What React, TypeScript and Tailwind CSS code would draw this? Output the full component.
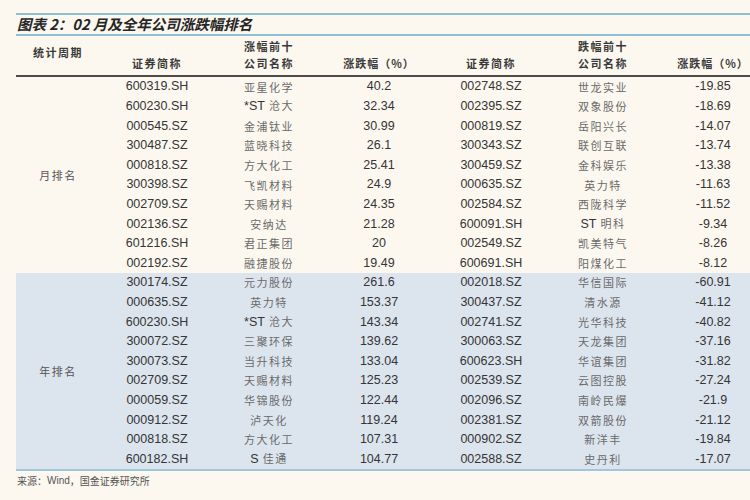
import React from 'react'

type Row = [string, string, string, string, string, string]

const monthRows: Row[] = [
  ['600319.SH', '亚星化学', '40.2', '002748.SZ', '世龙实业', '-19.85'],
  ['600230.SH', '*ST 沧大', '32.34', '002395.SZ', '双象股份', '-18.69'],
  ['000545.SZ', '金浦钛业', '30.99', '000819.SZ', '岳阳兴长', '-14.07'],
  ['300487.SZ', '蓝晓科技', '26.1', '300343.SZ', '联创互联', '-13.74'],
  ['000818.SZ', '方大化工', '25.41', '300459.SZ', '金科娱乐', '-13.38'],
  ['300398.SZ', '飞凯材料', '24.9', '000635.SZ', '英力特', '-11.63'],
  ['002709.SZ', '天赐材料', '24.35', '002584.SZ', '西陇科学', '-11.52'],
  ['002136.SZ', '安纳达', '21.28', '600091.SH', 'ST 明科', '-9.34'],
  ['601216.SH', '君正集团', '20', '002549.SZ', '凯美特气', '-8.26'],
  ['002192.SZ', '融捷股份', '19.49', '600691.SH', '阳煤化工', '-8.12'],
]

const yearRows: Row[] = [
  ['300174.SZ', '元力股份', '261.6', '002018.SZ', '华信国际', '-60.91'],
  ['000635.SZ', '英力特', '153.37', '300437.SZ', '清水源', '-41.12'],
  ['600230.SH', '*ST 沧大', '143.34', '002741.SZ', '光华科技', '-40.82'],
  ['300072.SZ', '三聚环保', '139.62', '300063.SZ', '天龙集团', '-37.16'],
  ['300073.SZ', '当升科技', '133.04', '600623.SH', '华谊集团', '-31.82'],
  ['002709.SZ', '天赐材料', '125.23', '002539.SZ', '云图控股', '-27.24'],
  ['000059.SZ', '华锦股份', '122.44', '002096.SZ', '南岭民爆', '-21.9'],
  ['000912.SZ', '泸天化', '119.24', '002381.SZ', '双箭股份', '-21.12'],
  ['000818.SZ', '方大化工', '107.31', '000902.SZ', '新洋丰', '-19.84'],
  ['600182.SH', 'S 佳通', '104.77', '002588.SZ', '史丹利', '-17.07'],
]

const cols = 'grid grid-cols-[114px_110px_110px_114px_110px_110px]'
const num = "font-['Liberation_Sans',sans-serif] text-[12.5px] text-[#353535] text-center"
const cjk = "font-['Noto_Sans_CJK_SC',sans-serif] text-[11px] tracking-[1.5px] text-[#6a6a6a] text-center"
const head = "font-['Noto_Sans_CJK_SC',sans-serif] text-[11px] font-bold tracking-[1.5px] text-[#3a3a3a] text-center"

function Name({ text }: { text: string }) {
  // names like "ST 明科" mix latin prefix with chinese
  const m = text.match(/^(\*?ST|S) (.*)$/)
  if (!m) return <div className={cjk}>{text}</div>
  return (
    <div className={cjk}>
      <span className="font-['Liberation_Sans',sans-serif] text-[12.5px] tracking-normal text-[#353535]">{m[1]}</span> {m[2]}
    </div>
  )
}

function Section({ label, rows, shaded }: { label: string; rows: Row[]; shaded?: boolean }) {
  return (
    <div className={`flex ${shaded ? 'bg-[#dce4ee]' : ''}`}>
      <div className={`w-[84px] flex items-center justify-center ${cjk} !text-[#555]`}>{label}</div>
      <div className="flex flex-col">
        {rows.map((r, i) => (
          <div key={i} className={`${cols} h-[19.6px] items-center`}>
            <div className={num}>{r[0]}</div>
            <Name text={r[1]} />
            <div className={num}>{r[2]}</div>
            <div className={num}>{r[3]}</div>
            <Name text={r[4]} />
            <div className={num}>{r[5]}</div>
          </div>
        ))}
      </div>
    </div>
  )
}

export default function App() {
  return (
    <div className="w-[750px] h-[500px] overflow-hidden bg-[#fcf8ef] pt-[13px] pl-[16px]">
      <div className="w-[752px]">
        <div className="h-[2px] bg-[#8fbfd5]" />
        <div className="h-[19px] flex items-center pl-[1px]">
          <span className="font-['Noto_Sans_CJK_SC',sans-serif] text-[14.5px] font-bold italic text-[#262626] leading-none">
            图表 2：02 月及全年公司涨跌幅排名
          </span>
        </div>
        <div className="h-[2px] bg-[#8fbfd5]" />

        {/* header */}
        <div className="flex h-[39px]">
          <div className={`w-[84px] pt-[8px] ${head}`}>统计周期</div>
          <div className={`${cols} grid-rows-[20px_15px]`}>
            <div />
            <div className={`${head} self-center`}>涨幅前十</div>
            <div />
            <div />
            <div className={`${head} self-center`}>跌幅前十</div>
            <div />
            <div className={`${head} self-center`}>证券简称</div>
            <div className={`${head} self-center`}>公司名称</div>
            <div className={`${head} self-center !tracking-[1px]`}>涨跌幅（%）</div>
            <div className={`${head} self-center`}>证券简称</div>
            <div className={`${head} self-center`}>公司名称</div>
            <div className={`${head} self-center !tracking-[1px]`}>涨跌幅（%）</div>
          </div>
        </div>
        <div className="h-[2px] bg-[#4d4d4d]" />

        <Section label="月排名" rows={monthRows} />
        <Section label="年排名" rows={yearRows} shaded />
        <div className="h-[2px] bg-[#9cc9df]" />

        <div className="h-[20px] flex items-center pl-[1px] font-['Noto_Sans_CJK_SC',sans-serif] text-[10px] text-[#555]">
          来源：<span className="font-['Liberation_Sans',sans-serif]">Wind</span>，国金证券研究所
        </div>
      </div>
    </div>
  )
}
